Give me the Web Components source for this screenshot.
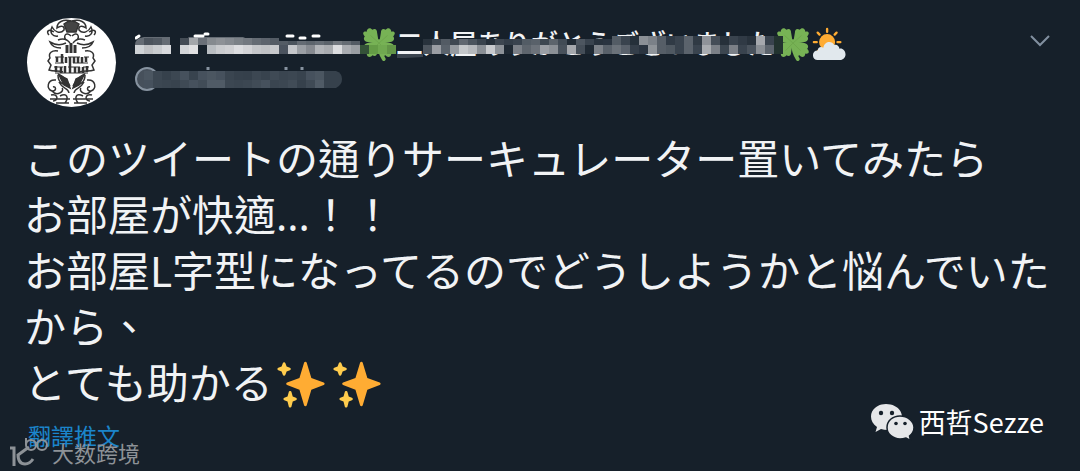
<!DOCTYPE html>
<html lang="zh-Hant">
<head>
<meta charset="utf-8">
<meta name="viewport" content="width=device-width, initial-scale=1">
<title>Tweet</title>
<style>
    body {
        margin: 0;
        background: #16202a;
        color: #f1f3f5;
        font-family: "Noto Sans", "Noto Sans CJK TC", sans-serif;
    }
</style>
</head>
<body>
<tweet-card>
    <user-avatar slot="avatar"></user-avatar>
    <masked-name slot="name">二人屋ありがとうございました</masked-name>
    <masked-handle slot="handle"></masked-handle>
    このツイートの通りサーキュレーター置いてみたら<br>お部屋が快適...！！<br>お部屋L字型になってるのでどうしようかと悩んでいたから、<br>とても助かる<emoji-icon name="sparkles"></emoji-icon><emoji-icon name="sparkles"></emoji-icon>
    <a slot="translate" href="#translate">翻譯推文</a>
</tweet-card>
<water-mark kind="site">大数跨境</water-mark>
<water-mark kind="wechat">西哲Sezze</water-mark>

<script>
const leaf = "M17 17L5 15C1 14 0 11 2 9C-1 6 0 3 4 4C4 0 8 -1 10 2C13 0 15 2 15 5Z";

const ICONS = {
    clover: `<svg viewBox="0 0 36 36">
        <path d="M18 17Q18 26 23 34" fill="none" stroke="#77b255" stroke-width="4" stroke-linecap="round"/>
        <g fill="#77b255">
            <path d="${leaf}" transform="translate(1 1)"/>
            <path d="${leaf}" transform="translate(35 1) scale(-1 1)"/>
            <path d="${leaf}" transform="translate(1 32) scale(1 -1)"/>
            <path d="${leaf}" transform="translate(35 32) scale(-1 -1)"/>
            <circle cx="18" cy="17" r="4"/>
        </g>
        <path d="M18 17L9 9M18 17L27 9M18 17L10 25M18 17L26 25" stroke="#5c913b" stroke-width="1" opacity=".35"/>
    </svg>`,
    sun: `<svg viewBox="0 0 36 36">
        <g stroke="#ffac33" stroke-width="2.500" stroke-linecap="round">
            <path d="M16 2V5M6 6L8 8M26 6L24 8M2 16H5M27 16H30M6 26L8 24"/>
        </g>
        <circle cx="16" cy="16" r="8.500" fill="#ffac33"/>
        <path d="M29 23C29 20 26 18 23.500 19C21 14 13 15 12 22C9 20 6 22 6 25C3 25 1 27 1 30C1 33 3 35 6 35H29C33 35 35.500 32 35.500 29C35.500 25 32 22 29 23Z" fill="#e1e8ed"/>
    </svg>`,
    sparkles: `<svg viewBox="0 0 36 36">
        <path fill="#ffac33" d="M34.347 16.893l-8.899-3.294-3.323-10.891c-.128-.42-.517-.708-.956-.708-.439 0-.828.288-.956.708l-3.322 10.891-8.9 3.294c-.393.146-.653.519-.653.938 0 .418.26.793.653.938l8.895 3.293 3.324 11.223c.126.424.516.715.959.715.442 0 .833-.291.959-.716l3.324-11.223 8.896-3.293c.391-.144.652-.518.652-.937 0-.418-.261-.792-.653-.938z"/>
        <path fill="#ffcc4d" d="M14.347 27.894l-2.314-.856-.9-3.3c-.118-.436-.513-.738-.964-.738-.451 0-.846.302-.965.737l-.9 3.3-2.313.856c-.393.146-.653.52-.653.938 0 .418.26.793.653.938l2.301.853.907 3.622c.112.444.511.756.97.756.459 0 .858-.312.97-.757l.907-3.622 2.301-.853c.393-.144.653-.519.653-.937 0-.418-.26-.793-.653-.937zM10.009 6.231l-2.364-.875-.876-2.365c-.145-.393-.519-.653-.938-.653-.418 0-.792.26-.938.653l-.875 2.365-2.365.875c-.393.146-.653.52-.653.938 0 .418.26.793.653.938l2.365.875.875 2.365c.146.393.52.653.938.653.418 0 .792-.26.938-.653l.875-2.365 2.365-.875c.393-.146.653-.52.653-.938 0-.418-.26-.792-.653-.938z"/>
    </svg>`,
    wechat: `<svg viewBox="0 0 44 38" width="44" height="38">
        <path d="M15 1C6.500 1 0 6.500 0 13.500C0 18 2 21 6 24L4.500 29L10 26Q13 27 17 27C25 27 31 21 31 14C31 6.500 24 1 15 1Z" fill="#e6e7e9"/>
        <path d="M29 13C21.500 13 16 18 16 24.500C16 31 22 36 29 36Q32 36 35 35L39.500 37.500L38.500 33C41 31 43 28 43 24.500C43 18 36.500 13 29 13Z" fill="#e6e7e9" stroke="#16202a" stroke-width="1.500"/>
        <g fill="#16202a"><circle cx="10" cy="10" r="2.200"/><circle cx="21" cy="10" r="2.200"/><circle cx="25" cy="20.500" r="1.800"/><circle cx="34" cy="20.500" r="1.800"/></g>
    </svg>`,
    site: `<svg viewBox="0 0 40 30" width="40" height="30" fill="none" stroke="#8d9297" stroke-width="3">
        <path d="M1 11H5V29M20 10L9 18M9 17C9 24 12 27 16 27C20 27 22 25 24 22"/>
        <g stroke-width="2"><path d="M17 1V8"/><circle cx="22" cy="8" r="5"/><circle cx="33" cy="8" r="5"/></g>
    </svg>`
};

// One 9px tile per colour, "-" leaves a gap
function tiles(colors, y, height = 9, x = 0) {
    return colors.split(" ").map((c, i) =>
        c === "-" ? "" : `<rect x="${x + i * 9}" y="${y}" width="9" height="${height}" fill="#${c}"/>`
    ).join("");
}

class EmojiIcon extends HTMLElement {
    connectedCallback() {
        const shadow = this.attachShadow({ mode: "open" });
        shadow.innerHTML = `
            <style>
                :host { display: inline-block; width: 50px; height: 50px; margin: 0 3px; vertical-align: -10px; }
                :host([small]) { width: 34px; height: 34px; margin: 0; }
                svg { display: block; width: 100%; height: 100%; }
            </style>
            ${ICONS[this.getAttribute("name")]}
        `;
    }
}
customElements.define("emoji-icon", EmojiIcon);

class UserAvatar extends HTMLElement {
    connectedCallback() {
        const half = `
            <path d="M44 3C36 1 30 4 30 10C34 7 38 8 37 12C33 17 27 13 25 9C22 15 26 19 31 18M44 18C39 13 36 18 39 22M31 22C36 20 40 21 43 25M27 14C21 10 19 14 22 17"/>
            <path d="M39 25C33 28 28 27 23 24C25 29 29 30 34 30M31 33C25 32 21 35 23 40L21 43L24 47L22 52C27 54 32 52 36 54"/>
            <path d="M31 56C36 58 40 62 43 68M31 57C31 64 36 68 42 66M32 64C36 72 41 69 42 75"/>
            <path d="M29 62C20 61 19 71 25 73C30 73 29 68 26 69M25 73C30 79 38 73 35 70M24 77C31 75 32 83 26 83M33 78C40 74 42 80 38 85M23 81H43M29 85H42"/>`;
        const shadow = this.attachShadow({ mode: "open" });
        shadow.innerHTML = `
            <style>
                :host { display: block; width: 89px; height: 89px; border-radius: 50%; background: #fff; overflow: hidden; }
                svg { display: block; }
            </style>
            <svg width="89" height="89" viewBox="0 0 89 89" fill="none" stroke="#333" stroke-width="1.500" role="img" aria-label="Avatar">
                <g>${half}</g>
                <g transform="translate(89 0) scale(-1 1)">${half}</g>
                <path d="M37 6Q44 0 52 6L49 14H40Z" fill="#444"/>
                <path d="M40 27V35M44 25V35M48 27V35" stroke-width="3"/>
                <path d="M30 39V44M35 36V45M39 39V45M43 39V47M47 39V45M51 39V45M55 39V45M59 39V44" stroke-width="2.500"/>
                <path d="M28 39H37M41 39H53M57 39H62M28 45H37M46 45H61" stroke-width="1"/>
                <path d="M29 48V54M34 49V55M38 48V55M43 47V55M48 49V55M52 49V55M56 49V55M60 48V54" stroke-width="2.500"/>
                <path d="M27 49H36M41 49H53M56 49H62M28 55H61" stroke-width="1"/>
                <path d="M32 57L40 61L43 70L37 67ZM57 57L49 61L46 70L52 67Z" fill="#333"/>
            </svg>
        `;
    }
}
customElements.define("user-avatar", UserAvatar);

class MaskedName extends HTMLElement {
    connectedCallback() {
        const top = "- 4b535c 515962 - - 444c55 a3a6aa 6a7078 858a8f 8d9196 858a90 7b8187 737980 656c74 5d646d 545c65";
        const nameRow = "cfd3d6 bfc1c4 c9cccf d8dadd - d3d5d8 e0e0e2 - b9bdc1 c9cbce cfd0d3 dcdde0 d3d4d7 c5c7ca c0c2c5 c7c9cc 4b535e c4c6ca 9b9fa4 868a90 b2b5b9 a9acb0 dcdde0 a9acb1 9a9ea3 345238 649c46 70a950 629547";
        const textTop = "28323c 3d4650 535b64 3f4852 606770 4b545e 39434d 26303a 3d4650 333d48 39434e 535c65 59616a 3d4751 5c646c 414b55 202a34 4d5660 39434e 28323d 2a3440 3a444e 303a44";
        const textRow = "4d555e 9a9da3 5a626b 959aa0 c4c7ca b5b8bc 8a8f95 c8cacd 8d9298 1f2933 7b8087 5e656d 6c727a 9a9ea4 8b9096 48515b a5a8ad 444d57 1f2933 7c8188 59616a 6b727a 59616b 343e49 2a3440 8f9499 565e67 4f5861 39434e 5b636c 3a444f a9acb0 7b8087 3c4650 7b8087 39434e 4a535d 8a8f95 5c646d 22332f";
        const tailTop = "535c65 39434e 25303a 8b9096 7b8188 565e67 303a45 39434e 5b636c 303a44 8f9399 444d57 26303a 39434e 303a45 28323c a5a8ad 39434e 22332f";
        const shadow = this.attachShadow({ mode: "open" });
        shadow.innerHTML = `
            <style>
                :host { display: flex; position: relative; align-items: center; height: 36px; padding-left: 227px; font-size: 27px; font-weight: 500; line-height: 36px; white-space: nowrap; }
                .mask { position: absolute; left: 0; top: 0; }
                .tail { display: flex; align-items: center; gap: 2px; margin-left: 2px; }
            </style>
            <emoji-icon small name="clover"></emoji-icon><span><slot></slot></span>
            <div class="tail"><emoji-icon small name="clover"></emoji-icon><emoji-icon small name="sun"></emoji-icon></div>
            <svg class="mask" width="648" height="36" aria-hidden="true">
                <path d="M9 11H35V19H0Q0 12 9 11ZM54 11H108L126 19H45Z" fill="#656c74"/>
                ${tiles(top, 12, 7)}
                ${tiles("545c65 4b545d 656c74 5d656d 656d75 5b636b 737980 656c74 535b64", 15, 4, 144)}
                ${tiles(nameRow, 19)}
                ${tiles(textTop, 13, 6, 288)}
                ${tiles(textRow, 19, 9, 288)}
                ${tiles(tailTop, 10, 9, 477)}
                <path d="M1 12L4 10M60 10H68M70 8H73M152 10H158M165 12H170M178 10H184" stroke="#fff" stroke-width="3" stroke-linecap="round"/>
                <path d="M262 28H288V31L270 32H262Z" fill="#3a444f"/>
            </svg>
        `;
    }
}
customElements.define("masked-name", MaskedName);

class MaskedHandle extends HTMLElement {
    connectedCallback() {
        const shadow = this.attachShadow({ mode: "open" });
        shadow.innerHTML = `
            <style>
                :host { display: block; height: 26px; }
                svg { display: block; }
            </style>
            <svg width="208" height="26" aria-hidden="true">
                <circle cx="12" cy="13" r="11" fill="#46505b" stroke="#8793a0" stroke-width="2"/>
                <path d="M18 5H201Q207 7 207 13T201 22H18Z" fill="#36414c"/>
                ${tiles("4b5661 3c4752 36414c 3c4752 46515d 38434e 46515d 4b5661 46515d 3a4550 36414c 35404b 3c4752 38434e 3f4a55 3a4550 3c4752 38434e 46515d 4b5661", 5, 9, 9)}
                ${tiles("46515d 3c4752 3a4550 38434e 3f4a55 46515d 414c57 505b66 505b66 3c4752 3a4550 3c4752 414c57 46515d 3a4550 3c4752 414c57 36414c 3f4a55 505b66", 14, 8, 9)}
                <path d="M73 1V4M151 1V4M167 1V4" stroke="#8793a0" stroke-width="3"/>
            </svg>
        `;
    }
}
customElements.define("masked-handle", MaskedHandle);

class WaterMark extends HTMLElement {
    connectedCallback() {
        const shadow = this.attachShadow({ mode: "open" });
        shadow.innerHTML = `
            <style>
                :host { position: absolute; display: flex; align-items: center; white-space: nowrap; font-family: "Noto Sans CJK SC", sans-serif; }
                :host([kind="site"]) { left: 9px; bottom: 4px; gap: 3px; color: #8d9297; font-size: 22px; line-height: 30px; }
                :host([kind="wechat"]) { right: 36px; bottom: 30px; gap: 4px; color: #fff; font-size: 27px; line-height: 38px; }
                svg { display: block; }
            </style>
            ${ICONS[this.getAttribute("kind")]}
            <span lang="zh-Hans"><slot></slot></span>
        `;
    }
}
customElements.define("water-mark", WaterMark);

const template = document.createElement("template");
template.innerHTML = `
    <style>
        :host { display: block; padding: 18px 20px 16px 24px; }
        header { display: flex; padding-left: 3px; }
        .names { flex: 1; min-width: 0; margin-left: 19px; padding-top: 8px; }
        .names ::slotted(masked-handle) { margin-top: 4px; }
        button { display: grid; place-items: center; width: 40px; height: 40px; padding: 0; margin-top: 3px; border: 0; background: none; cursor: pointer; }
        .text { margin: 24px 0 0; font-size: 42px; line-height: 56px; }
        footer { padding: 8px 4px 0; }
        ::slotted(a) { color: #1b85cb; font-size: 23px; line-height: 34px; text-decoration: none; }
    </style>
    <article>
        <header>
            <slot name="avatar"></slot>
            <div class="names">
                <slot name="name"></slot>
                <slot name="handle"></slot>
            </div>
            <button type="button" aria-label="More">
                <svg width="22" height="14" viewBox="0 0 22 14" fill="none" stroke="#8290a0" stroke-width="2"><path d="M2 2L11 11L20 2"/></svg>
            </button>
        </header>
        <p class="text"><slot></slot></p>
        <footer><slot name="translate"></slot></footer>
    </article>
`;

class TweetCard extends HTMLElement {
    constructor() {
        super();
        const shadow = this.attachShadow({ mode: "open" });
        shadow.append(template.content.cloneNode(true));
    }
}
customElements.define("tweet-card", TweetCard);
</script>
</body>
</html>
